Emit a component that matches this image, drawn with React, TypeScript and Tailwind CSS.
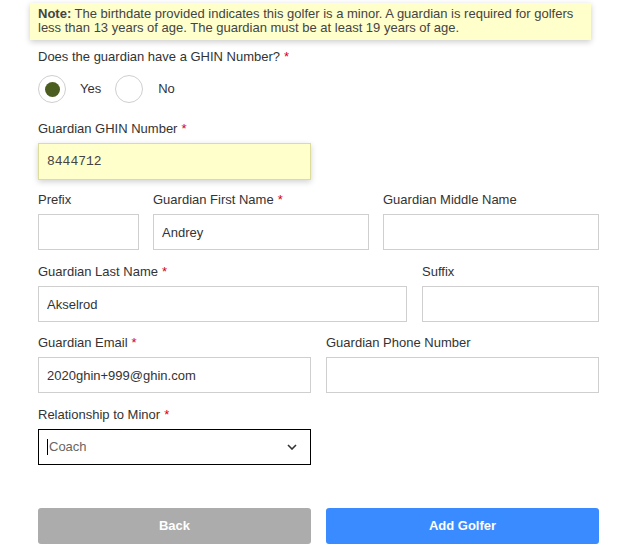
import React from "react";

interface FieldProps {
  label: string;
  required?: boolean;
  value?: string;
  className?: string;
}

function Field({ label, required = false, value = "", className = "" }: FieldProps) {
  return (
    <div className={`flex flex-col ${className}`}>
      <label className="text-[13px] leading-4 text-[#333] mb-[6px]">
        {label}
        {required && <span className="text-[#d0021b] ml-1">*</span>}
      </label>
      <input
        readOnly
        value={value}
        className="h-9 w-full border border-[#cfcfcf] bg-white px-2 text-[13px] text-[#333] outline-none"
      />
    </div>
  );
}

export default function App() {
  return (
    <div className="min-h-[559px] w-[638px] bg-white font-['Liberation_Sans',Arial,sans-serif] text-[#333]">
      <div className="pt-[3px] pl-[30px] pr-[47px]">
        {/* Minor notice */}
        <div className="whitespace-nowrap bg-[#ffffcc] px-2 pt-[4px] pb-[5px] text-[13px] leading-[14px] text-[#444] shadow-[0_2px_6px_rgba(0,0,0,0.2)]">
          <span className="font-bold">Note:</span> The birthdate provided indicates this golfer is a minor. A guardian is required for golfers
          <br />
          less than 13 years of age. The guardian must be at least 19 years of age.
        </div>
      </div>

      <div className="pl-[38px] pr-[39px]">
        {/* GHIN question */}
        <div className="mt-[9px] text-[13px] leading-4 text-[#333]">
          Does the guardian have a GHIN Number?<span className="text-[#d0021b] ml-1">*</span>
        </div>
        <div className="mt-[10px] flex items-center">
          <span className="flex h-[28px] w-[28px] items-center justify-center rounded-full border border-[#cfcfcf]">
            <span className="h-[15px] w-[15px] rounded-full bg-[#4b5e20]" />
          </span>
          <span className="ml-[14px] text-[13px]">Yes</span>
          <span className="ml-[14px] h-[28px] w-[28px] rounded-full border border-[#cfcfcf]" />
          <span className="ml-[15px] text-[13px]">No</span>
        </div>

        {/* Guardian GHIN */}
        <div className="mt-[18px] text-[13px] leading-4">
          Guardian GHIN Number<span className="text-[#d0021b] ml-1">*</span>
        </div>
        <div className="mt-[6px] w-[273px]">
          <input
            readOnly
            value="8444712"
            className="h-[37px] w-full border border-[#dcdc9c] bg-[#ffffcc] px-2 font-['Liberation_Mono',monospace] text-[13px] text-[#444] shadow-[0_2px_6px_rgba(0,0,0,0.18)] outline-none"
          />
        </div>

        {/* Name row */}
        <div className="mt-[12px] flex gap-[14px]">
          <Field label="Prefix" className="w-[101px]" />
          <Field label="Guardian First Name" required value="Andrey" className="w-[216px]" />
          <Field label="Guardian Middle Name" className="flex-1" />
        </div>

        <div className="mt-[14px] flex gap-[15px]">
          <Field label="Guardian Last Name" required value="Akselrod" className="w-[369px]" />
          <Field label="Suffix" className="flex-1" />
        </div>

        <div className="mt-[13px] flex gap-[15px]">
          <Field label="Guardian Email" required value="2020ghin+999@ghin.com" className="w-[273px]" />
          <Field label="Guardian Phone Number" className="flex-1" />
        </div>

        {/* Relationship */}
        <div className="mt-[14px] text-[13px] leading-4">
          Relationship to Minor<span className="text-[#d0021b] ml-1">*</span>
        </div>
        <div className="mt-[6px] flex h-9 w-[273px] items-center justify-between border border-black px-2">
          <span className="flex items-center text-[13px] text-[#666]">
            <span className="mr-[1px] h-[16px] w-px bg-black" />
            Coach
          </span>
          <svg width="10" height="6" viewBox="0 0 10 6" className="mr-[5px]">
            <path d="M1 1l4 4 4-4" fill="none" stroke="#333" strokeWidth="1.6" />
          </svg>
        </div>

        {/* Actions */}
        <div className="mt-[43px] flex gap-[15px]">
          <button className="h-9 flex-1 rounded-[3px] bg-[#acacac] text-[13px] font-bold text-white">
            Back
          </button>
          <button className="h-9 flex-1 rounded-[3px] bg-[#3a8bff] text-[13px] font-bold text-white">
            Add Golfer
          </button>
        </div>
      </div>
    </div>
  );
}
